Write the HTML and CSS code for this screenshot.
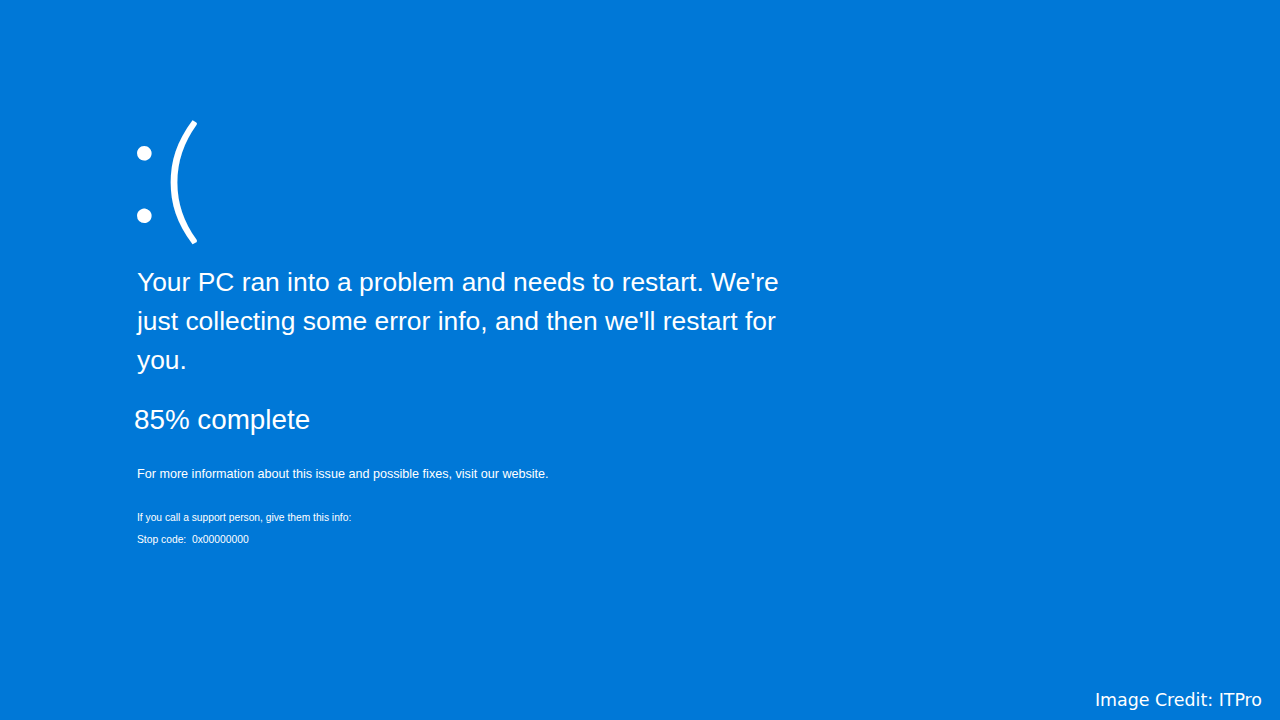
FILE: index.html
```html
<!DOCTYPE html>
<html lang="en">
<head>
<meta charset="utf-8">
<title>Your PC ran into a problem</title>
<link rel="stylesheet" href="styles.css">
</head>
<body>
<main class="screen">
  <section class="content">
    <div class="face"><span class="eyes">:</span><span class="mouth">(</span></div>
    <p class="message">Your PC ran into a problem and needs to restart. We're<br>just collecting some error info, and then we'll restart for<br>you.</p>
    <p class="progress">85% complete</p>
    <p class="more">For more information about this issue and possible fixes, visit our website.</p>
    <p class="support">If you call a support person, give them this info:</p>
    <p class="code">Stop code:&nbsp; 0x00000000</p>
  </section>
  <footer class="credit">Image Credit: ITPro</footer>
</main>
</body>
</html>
```
FILE: styles.css
```css
html, body {
  margin: 0;
  padding: 0;
}
body {
  background: #0078d7;
  color: #ffffff;
  font-family: "Liberation Sans", Arial, sans-serif;
}
.screen {
  width: 1280px;
  height: 720px;
  display: flex;
  flex-direction: column;
  box-sizing: border-box;
  overflow: hidden;
}
.content {
  display: flex;
  flex-direction: column;
  padding: 80px 0 0 134px;
}
.content p {
  margin: 0;
}
.face {
  height: 166px;
  display: flex;
  align-items: flex-start;
  font-family: Lato, "Open Sans", sans-serif;
  font-weight: 300;
}
.eyes {
  margin: 3px 0 0 -8.5px;
  font-size: 157px;
  line-height: 157px;
  letter-spacing: -8px;
}
.mouth {
  margin: 24px 0 0 6.5px;
  font-size: 137.6px;
  line-height: 138px;
  transform: scaleX(1.15);
  transform-origin: left center;
}
.message {
  margin-top: 17px !important;
  padding-left: 3px;
  font-size: 26.4px;
  line-height: 39px;
}
.progress {
  margin-top: 20px !important;
  font-size: 27.8px;
  line-height: 40px;
}
.more {
  margin-top: 23.5px !important;
  padding-left: 3px;
  font-size: 12.6px;
  line-height: 20px;
}
.support {
  margin-top: 26px !important;
  padding-left: 3px;
  font-size: 10.25px;
  line-height: 16px;
}
.code {
  margin-top: 6px !important;
  padding-left: 3px;
  font-size: 10.3px;
  line-height: 16px;
}
.credit {
  margin-top: auto;
  align-self: flex-end;
  padding: 0 18px 8px 0;
  font-family: "DejaVu Sans", sans-serif;
  font-size: 17.4px;
  line-height: 24px;
}
```
